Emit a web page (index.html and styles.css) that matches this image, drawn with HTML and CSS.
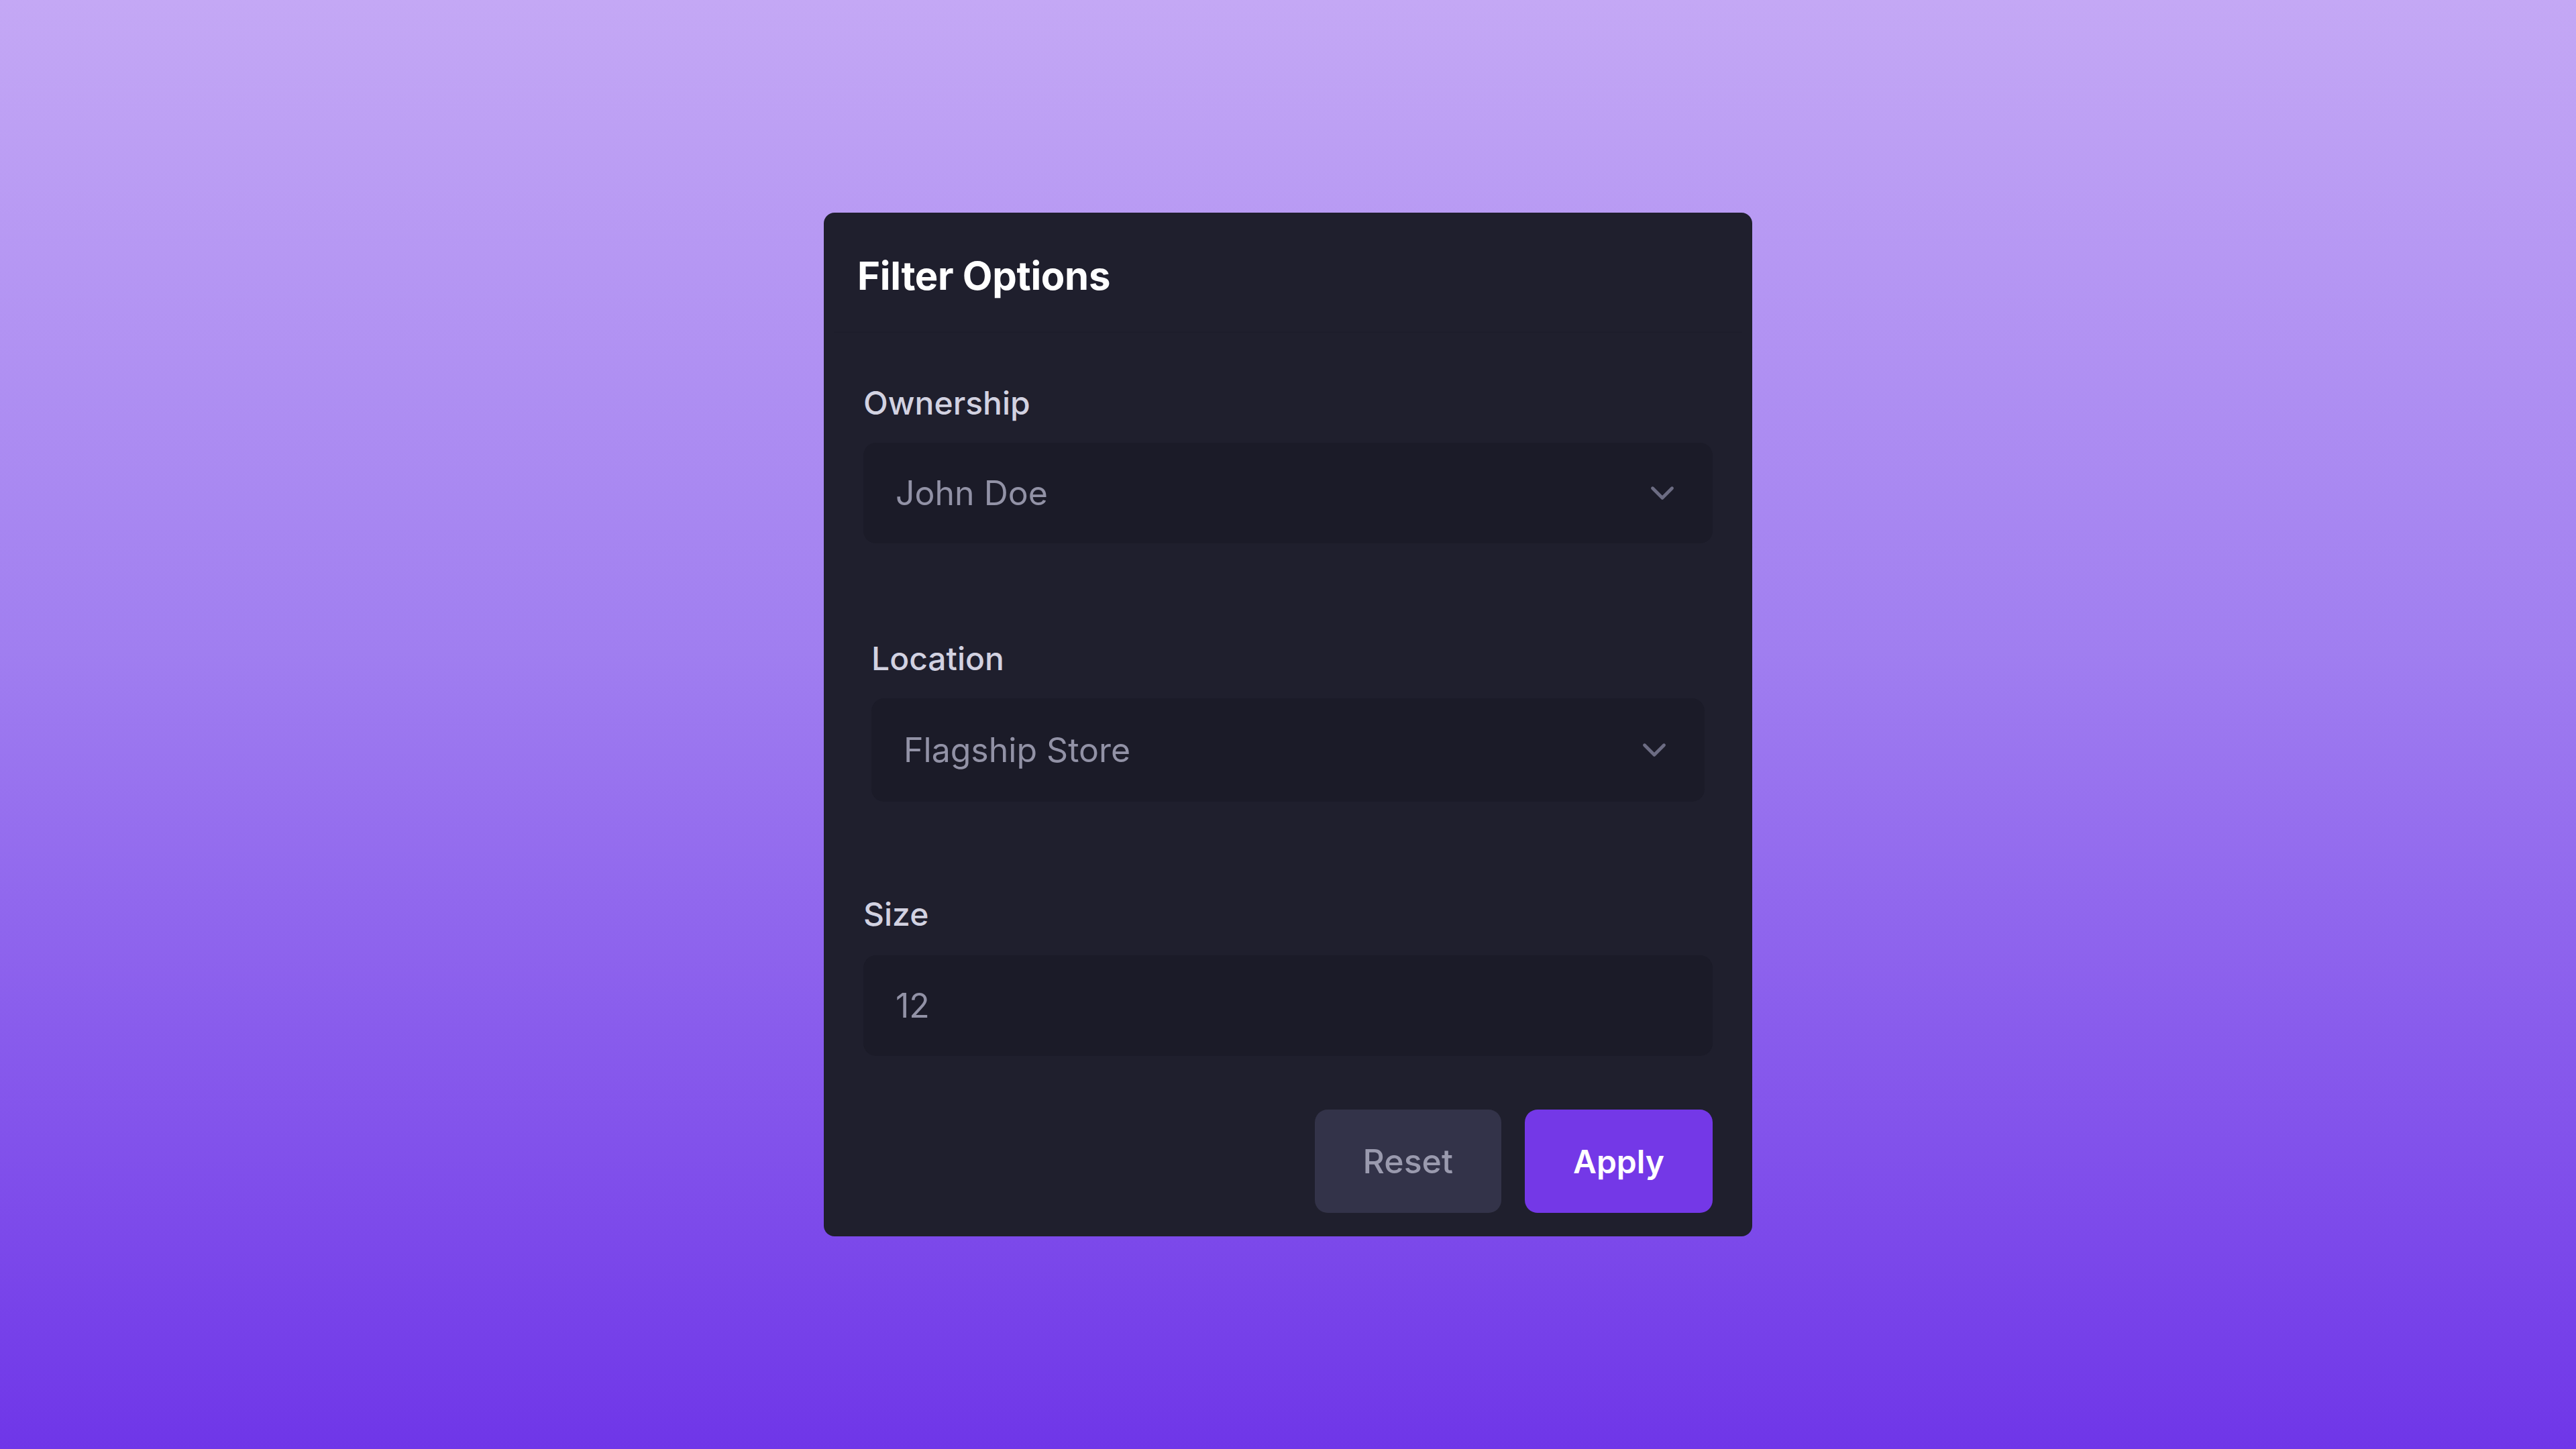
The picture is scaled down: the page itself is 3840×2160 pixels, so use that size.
FILE: index.html
```html
<!DOCTYPE html>
<html lang="en">
<head>
<meta charset="utf-8">
<title>Filter Options</title>
<link rel="stylesheet" href="styles.css">
</head>
<body>
  <div class="card">
    <div class="card-header">
      <h2 class="card-title">Filter Options</h2>
    </div>
    <div class="card-body">
      <div class="field field-ownership">
        <label class="field-label">Ownership</label>
        <div class="control control-select">
          <span class="control-value">John Doe</span>
          <svg class="chevron" viewBox="0 0 24 24" fill="none" stroke="currentColor" stroke-width="2" stroke-linecap="round" stroke-linejoin="round"><polyline points="6 9 12 15 18 9"></polyline></svg>
        </div>
      </div>
      <div class="field field-location">
        <label class="field-label">Location</label>
        <div class="control control-select control-tall">
          <span class="control-value">Flagship Store</span>
          <svg class="chevron" viewBox="0 0 24 24" fill="none" stroke="currentColor" stroke-width="2" stroke-linecap="round" stroke-linejoin="round"><polyline points="6 9 12 15 18 9"></polyline></svg>
        </div>
      </div>
      <div class="field field-size">
        <label class="field-label">Size</label>
        <div class="control">
          <span class="control-value">12</span>
        </div>
      </div>
      <div class="actions">
        <button class="btn btn-reset">Reset</button>
        <button class="btn btn-apply">Apply</button>
      </div>
    </div>
  </div>
</body>
</html>
```

FILE: styles.css
```css
* {
  box-sizing: border-box;
}

html, body {
  margin: 0;
  padding: 0;
}

body {
  width: 3840px;
  height: 2160px;
  display: flex;
  align-items: center;
  justify-content: center;
  background: linear-gradient(180deg, #c4a8f5 0%, #a07ef0 45%, #6f36e8 100%);
  font-family: "Inter", "Noto Sans", "Liberation Sans", sans-serif;
}

.card {
  width: 1384px;
  background: #1f1f2d;
  border-radius: 16px;
  padding-top: 59px;
  padding-bottom: 35px;
  display: flex;
  flex-direction: column;
}

.card-header {
  margin: 0 15px;
  padding: 0 35px 48px;
  border-bottom: 2px solid #1d1d2b;
}

.card-title {
  margin: 0;
  font-size: 58px;
  line-height: 70px;
  font-weight: 700;
  color: #ffffff;
  letter-spacing: -0.3px;
}

.card-body {
  padding: 76px 59px 0;
  display: flex;
  flex-direction: column;
}

.field {
  display: flex;
  flex-direction: column;
}

.field-location {
  margin: 143px 12px 0;
}

.field-size {
  margin-top: 139px;
}

.field-label {
  font-size: 48px;
  line-height: 58px;
  font-weight: 500;
  color: #d2d2e1;
  margin-bottom: 30px;
}

.field-size .field-label {
  margin-bottom: 32px;
}

.control {
  height: 150px;
  background: #1b1b28;
  border-radius: 19px;
  padding: 0 48px;
  display: flex;
  align-items: center;
  justify-content: space-between;
}

.control-tall {
  height: 154px;
}

.control-value {
  font-size: 50px;
  font-weight: 400;
  color: #9292a6;
}

.chevron {
  width: 58px;
  height: 58px;
  color: #6c6c83;
  flex: none;
  margin-right: -2px;
}

.actions {
  margin-top: 80px;
  display: flex;
  justify-content: flex-end;
  gap: 35px;
}

.btn {
  height: 154px;
  padding: 0 72px;
  border: none;
  border-radius: 19px;
  font-family: inherit;
  font-size: 48px;
}

.btn-reset {
  background: #333349;
  color: #9a9aae;
  font-weight: 500;
  font-size: 50px;
}

.btn-apply {
  background: #7438e7;
  color: #ffffff;
  font-weight: 600;
}
```
